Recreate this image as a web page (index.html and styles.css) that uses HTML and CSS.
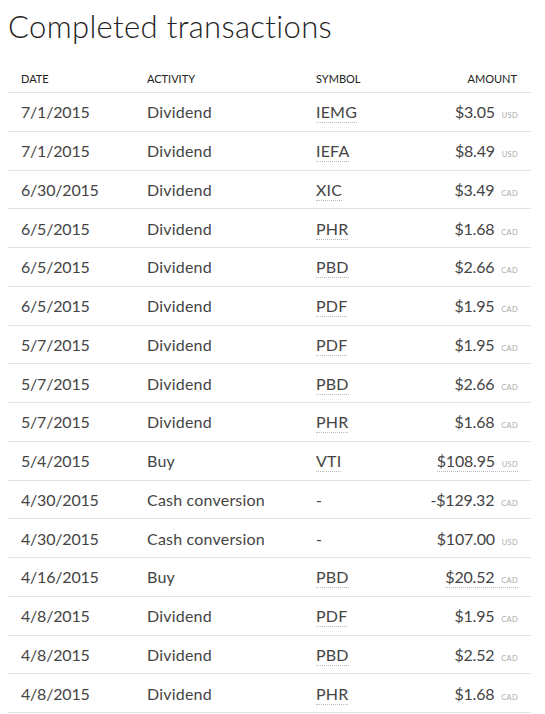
FILE: index.html
```html
<!DOCTYPE html>
<html>
<head>
<meta charset="utf-8">
<link rel="stylesheet" href="styles.css">
</head>
<body>
<h1 class="title">Completed transactions</h1>
<table class="tx">
  <thead>
    <tr><th class="c-date">Date</th><th class="c-act">Activity</th><th class="c-sym">Symbol</th><th class="c-amt">Amount</th></tr>
  </thead>
  <tbody>
    <tr><td class="c-date">7/1/2015</td><td class="c-act">Dividend</td><td class="c-sym"><span class="sym">IEMG</span></td><td class="c-amt"><span class="amt">$3.05</span><span class="cur">USD</span></td></tr>
    <tr><td class="c-date">7/1/2015</td><td class="c-act">Dividend</td><td class="c-sym"><span class="sym">IEFA</span></td><td class="c-amt"><span class="amt">$8.49</span><span class="cur">USD</span></td></tr>
    <tr><td class="c-date">6/30/2015</td><td class="c-act">Dividend</td><td class="c-sym"><span class="sym">XIC</span></td><td class="c-amt"><span class="amt">$3.49</span><span class="cur">CAD</span></td></tr>
    <tr><td class="c-date">6/5/2015</td><td class="c-act">Dividend</td><td class="c-sym"><span class="sym">PHR</span></td><td class="c-amt"><span class="amt">$1.68</span><span class="cur">CAD</span></td></tr>
    <tr><td class="c-date">6/5/2015</td><td class="c-act">Dividend</td><td class="c-sym"><span class="sym">PBD</span></td><td class="c-amt"><span class="amt">$2.66</span><span class="cur">CAD</span></td></tr>
    <tr><td class="c-date">6/5/2015</td><td class="c-act">Dividend</td><td class="c-sym"><span class="sym">PDF</span></td><td class="c-amt"><span class="amt">$1.95</span><span class="cur">CAD</span></td></tr>
    <tr><td class="c-date">5/7/2015</td><td class="c-act">Dividend</td><td class="c-sym"><span class="sym">PDF</span></td><td class="c-amt"><span class="amt">$1.95</span><span class="cur">CAD</span></td></tr>
    <tr><td class="c-date">5/7/2015</td><td class="c-act">Dividend</td><td class="c-sym"><span class="sym">PBD</span></td><td class="c-amt"><span class="amt">$2.66</span><span class="cur">CAD</span></td></tr>
    <tr><td class="c-date">5/7/2015</td><td class="c-act">Dividend</td><td class="c-sym"><span class="sym">PHR</span></td><td class="c-amt"><span class="amt">$1.68</span><span class="cur">CAD</span></td></tr>
    <tr><td class="c-date">5/4/2015</td><td class="c-act">Buy</td><td class="c-sym"><span class="sym">VTI</span></td><td class="c-amt"><span class="amt-wrap"><span class="amt">$108.95</span><span class="cur">USD</span></span></td></tr>
    <tr><td class="c-date">4/30/2015</td><td class="c-act">Cash conversion</td><td class="c-sym">-</td><td class="c-amt"><span class="amt">-$129.32</span><span class="cur">CAD</span></td></tr>
    <tr><td class="c-date">4/30/2015</td><td class="c-act">Cash conversion</td><td class="c-sym">-</td><td class="c-amt"><span class="amt">$107.00</span><span class="cur">USD</span></td></tr>
    <tr><td class="c-date">4/16/2015</td><td class="c-act">Buy</td><td class="c-sym"><span class="sym">PBD</span></td><td class="c-amt"><span class="amt-wrap"><span class="amt">$20.52</span><span class="cur">CAD</span></span></td></tr>
    <tr><td class="c-date">4/8/2015</td><td class="c-act">Dividend</td><td class="c-sym"><span class="sym">PDF</span></td><td class="c-amt"><span class="amt">$1.95</span><span class="cur">CAD</span></td></tr>
    <tr><td class="c-date">4/8/2015</td><td class="c-act">Dividend</td><td class="c-sym"><span class="sym">PBD</span></td><td class="c-amt"><span class="amt">$2.52</span><span class="cur">CAD</span></td></tr>
    <tr><td class="c-date">4/8/2015</td><td class="c-act">Dividend</td><td class="c-sym"><span class="sym">PHR</span></td><td class="c-amt"><span class="amt">$1.68</span><span class="cur">CAD</span></td></tr>
  </tbody>
</table>
</body>
</html>
```
FILE: styles.css
```css
html, body {
  margin: 0;
  padding: 0;
  background: #fff;
}
body {
  font-family: Lato, "Open Sans", sans-serif;
  color: #444;
  padding: 0 14px 0 8px;
}
.title {
  margin: 0;
  padding-top: 7px;
  font-size: 31px;
  font-weight: 300;
  line-height: 38px;
  color: #222;
  letter-spacing: 0.35px;
}
.tx {
  width: 523px;
  border-collapse: collapse;
  margin-top: 16px;
}
.tx th {
  font-size: 11px;
  font-weight: 400;
  text-transform: uppercase;
  color: #222;
  text-align: left;
  height: 27px;
  padding: 4px 0 0 0;
  vertical-align: middle;
  border-bottom: 1px solid #e3e3e3;
}
.tx td {
  font-size: 16px;
  font-weight: 400;
  height: 37.75px;
  padding: 0;
  vertical-align: middle;
  border-bottom: 1px solid #e3e3e3;
  white-space: nowrap;
  letter-spacing: 0.2px;
}
.tx td.c-date { letter-spacing: -0.2px; }
.tx .c-date { width: 126px; padding-left: 13px; }
.tx .c-act { width: 169px; }
.tx .c-sym { width: 110px; }
.tx .c-amt { text-align: right; padding-right: 13px; }
.tx th.c-amt { padding-right: 14px; }
.amt { letter-spacing: -0.2px; }
.sym {
  border-bottom: 1px dotted #bbb;
  padding-bottom: 1px;
}
.amt-wrap {
  border-bottom: 1px dotted #bbb;
  padding-bottom: 1px;
}
.cur {
  font-size: 7.5px;
  color: #aaa;
  margin-left: 7px;
  letter-spacing: 0.3px;
}
```
